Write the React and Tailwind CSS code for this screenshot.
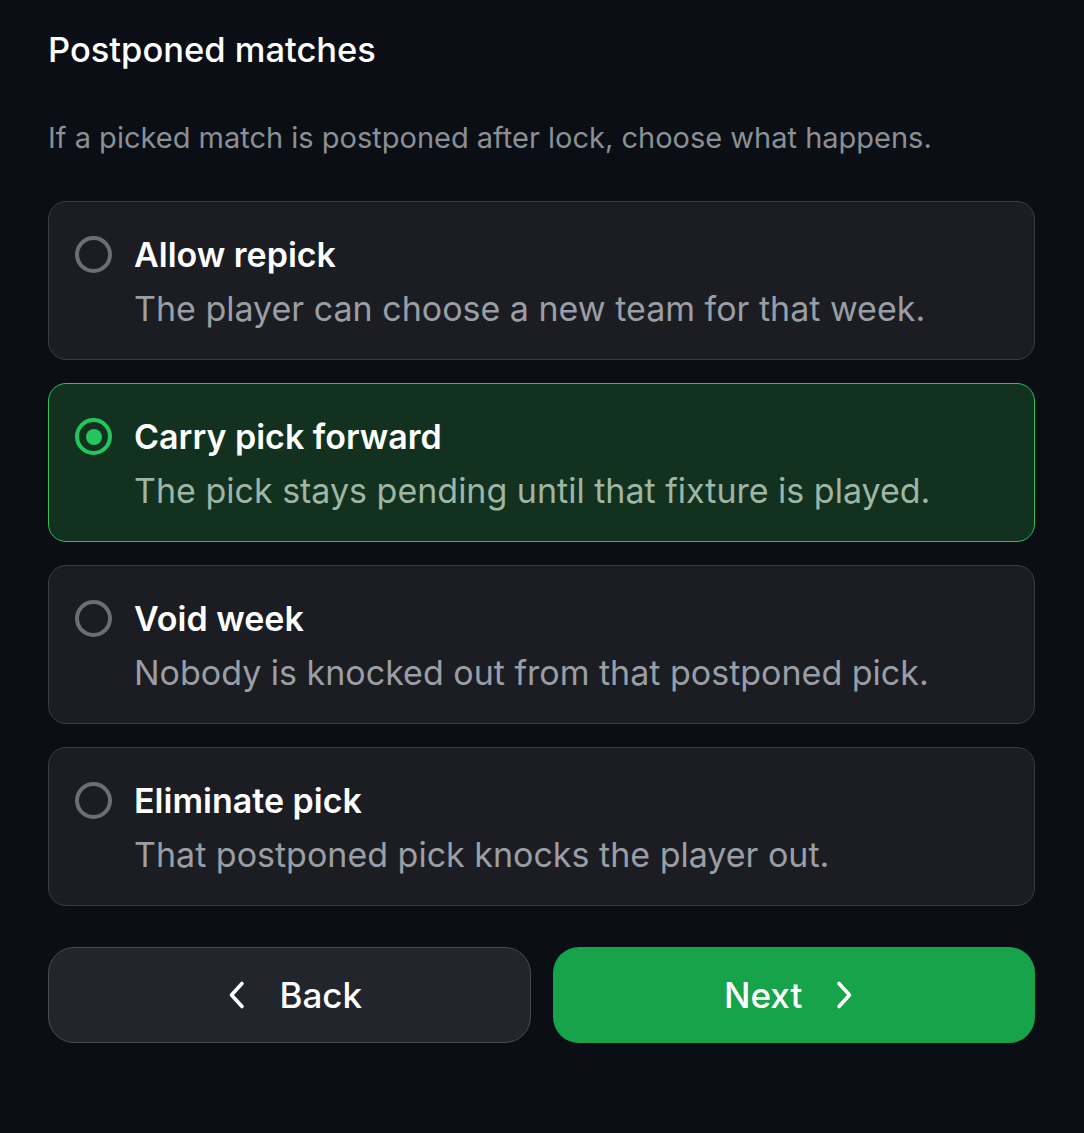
import React, { useState } from "react";

const options = [
  { title: "Allow repick", desc: "The player can choose a new team for that week." },
  { title: "Carry pick forward", desc: "The pick stays pending until that fixture is played." },
  { title: "Void week", desc: "Nobody is knocked out from that postponed pick." },
  { title: "Eliminate pick", desc: "That postponed pick knocks the player out." },
];

function Chevron({ dir }) {
  return (
    <svg width="18" height="30" viewBox="0 0 18 30" fill="none" stroke="currentColor" strokeWidth="3.6" strokeLinecap="round" strokeLinejoin="round">
      {dir === "left" ? <path d="M14 3.5 L3.5 15 L14 26.5" /> : <path d="M4 3.5 L14.5 15 L4 26.5" />}
    </svg>
  );
}

export default function App() {
  const [sel, setSel] = useState(1);
  return (
    <div className="min-h-[1133px] w-full bg-[#0b0e14] text-white" style={{ fontFamily: "Inter, 'Noto Sans', sans-serif" }}>
      <div className="px-12 pt-[28px] pr-[49px]">
        <h1 className="text-[34.5px] font-medium leading-[44px] text-white">Postponed matches</h1>
        <p className="mt-[46px] text-[29px] leading-[40px] text-[#8b8f96]">
          If a picked match is postponed after lock, choose what happens.
        </p>
        <div className="mt-[43px] flex flex-col gap-[23px]">
          {options.map((o, i) => {
            const active = i === sel;
            return (
              <button
                key={o.title}
                onClick={() => setSel(i)}
                className={
                  "flex h-[159px] w-full items-start gap-[22px] rounded-[18px] border-[1.5px] px-[26px] pt-[33px] text-left " +
                  (active ? "border-[#2fbf5f] bg-[#12321f]" : "border-[#3a3d44] bg-[#1b1d23]")
                }
              >
                <span
                  className={
                    "mt-[1px] flex h-[37px] w-[37px] shrink-0 items-center justify-center rounded-full border-[4px] " +
                    (active ? "border-[#22c55e]" : "border-[#6b6e74]")
                  }
                >
                  {active && <span className="h-[16px] w-[16px] rounded-full bg-[#22c55e]" />}
                </span>
                <span className="flex flex-col">
                  <span className="text-[34px] font-semibold leading-[40px] text-white">{o.title}</span>
                  <span className={"mt-[14px] text-[34px] leading-[40px] " + (active ? "text-[#9fb5a6]" : "text-[#9a9ea5]")}>
                    {o.desc}
                  </span>
                </span>
              </button>
            );
          })}
        </div>
        <div className="mt-[41px] grid grid-cols-2 gap-[22px]">
          <button className="flex h-[96px] items-center justify-center gap-[33px] rounded-[26px] border-[1.5px] border-[#484b51] bg-[#22252b] pl-[12px] text-[35px] font-medium text-white">
            <Chevron dir="left" />
            <span>Back</span>
          </button>
          <button className="flex h-[96px] items-center justify-center gap-[33px] rounded-[26px] bg-[#16a34a] pr-[10px] text-[35px] font-medium text-white">
            <span>Next</span>
            <Chevron dir="right" />
          </button>
        </div>
      </div>
    </div>
  );
}
